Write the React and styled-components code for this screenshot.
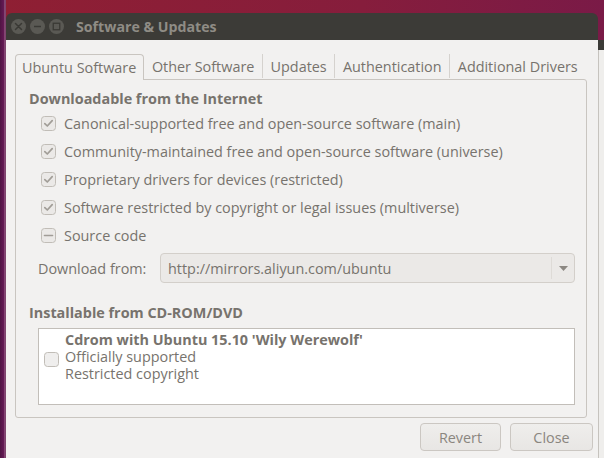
import React from "react";
import styled, { createGlobalStyle } from "styled-components";

const Global = createGlobalStyle`
  html, body { margin: 0; padding: 0; }
  body { font-family: "Open Sans", "DejaVu Sans", sans-serif; }
`;

const FONT = `"Open Sans", "DejaVu Sans", sans-serif`;
const TEXT = "#77736d";
const FS = "14.4px";

const Screen = styled.div`
  width: 604px;
  height: 458px;
  display: flex;
  overflow: hidden;
  background: linear-gradient(90deg, #8f1f33 0%, #861d3c 60%, #7a1a47 100%);
  font-family: ${FONT};
`;

const LeftStrip = styled.div`
  width: 6px;
  flex: none;
  background: linear-gradient(90deg, #4f1443 0, #661a55 4px, #a07090 5px, #5e1a4c 6px);
`;

const RightStrip = styled.div`
  width: 6px;
  flex: none;
  display: flex;
  flex-direction: column;
`;

const RightTop = styled.div`
  height: 40px;
  flex: none;
`;

const RightDark = styled.div`
  height: 10px;
  background: #3c3b37;
  flex: none;
`;

const RightBody = styled.div`
  flex: 1;
  background: #efeeec;
  border-left: 1px solid #c6c3be;
`;

const Window = styled.div`
  flex: 1;
  margin-top: 13px;
  display: flex;
  flex-direction: column;
  min-width: 0;
`;

const TitleBar = styled.div`
  height: 27px;
  flex: none;
  background: #3c3b37;
  border-radius: 6px 6px 0 0;
  display: flex;
  align-items: center;
  padding-left: 5px;
  gap: 4px;
`;

const WinButton = styled.div`
  width: 15px;
  height: 15px;
  border-radius: 50%;
  background: #5a5954;
  display: flex;
  align-items: center;
  justify-content: center;
`;

const Title = styled.div`
  margin-left: 8px;
  font-family: ${FONT};
  font-weight: 700;
  font-size: 14.2px;
  color: #8f8c85;
`;

const Body = styled.div`
  flex: 1;
  background: #f2f1f0;
  padding: 13px 5px 0 9px;
  display: flex;
  flex-direction: column;
  background-image: radial-gradient(ellipse 260px 14px at 260px 106%, rgba(60, 55, 50, 0.35), rgba(0, 0, 0, 0) 100%);
`;

const Notebook = styled.div`
  margin-right: 6px;
  display: flex;
  flex-direction: column;
`;

const TabRow = styled.div`
  display: flex;
  align-items: flex-end;
  height: 26px;
`;

const Tab = styled.div`
  box-sizing: border-box;
  display: flex;
  align-items: center;
  padding: 0 7.6px;
  font-size: ${FS};
  color: ${TEXT};
  white-space: nowrap;
  position: relative;
  ${(p) =>
    p.$active
      ? `
    padding: 0 7px 0 6px;
    border: 1px solid #c9c5c0;
    border-bottom: none;
    border-radius: 4px 4px 0 0;
    height: 26px;
    background: #f2f1f0;
    margin-bottom: -1px;
    z-index: 1;
  `
      : `
    border-right: 1px solid #d5d2ce;
    height: 24px;
    margin-bottom: 1px;
  `}
  ${(p) => (p.$last ? "border-right: none;" : "")}
`;

const Panel = styled.div`
  border: 1px solid #c9c5c0;
  border-radius: 0 3px 3px 3px;
  height: 339px;
  box-sizing: border-box;
  padding: 10px 11px 0 13px;
  display: flex;
  flex-direction: column;
`;

const Heading = styled.div`
  font-weight: 700;
  font-size: ${FS};
  line-height: 18px;
  color: ${TEXT};
  margin-top: ${(p) => p.$mt || 0}px;
`;

const CheckRow = styled.label`
  display: flex;
  align-items: center;
  gap: 8px;
  height: 28px;
  margin-left: 12px;
  font-size: ${FS};
  color: ${TEXT};
  white-space: nowrap;
`;

const CheckList = styled.div`
  margin-top: 1px;
  display: flex;
  flex-direction: column;
`;

const DownloadRow = styled.div`
  display: flex;
  align-items: center;
  margin-top: 4px;
  margin-left: 9px;
  height: 30px;
`;

const DownloadLabel = styled.div`
  font-size: ${FS};
  color: ${TEXT};
  width: 122px;
  flex: none;
  white-space: nowrap;
`;

const Combo = styled.div`
  flex: 1;
  height: 30px;
  box-sizing: border-box;
  border: 1px solid #d3cfca;
  border-radius: 4px;
  background: #ebe9e7;
  display: flex;
  align-items: center;
  padding-left: 7px;
  font-size: ${FS};
  color: ${TEXT};
`;

const ComboText = styled.div`
  flex: 1;
  white-space: nowrap;
`;

const ComboSep = styled.div`
  width: 1px;
  height: 22px;
  background: #dedbd7;
`;

const ComboArrow = styled.div`
  width: 22px;
  display: flex;
  justify-content: center;
  align-items: center;
`;

const ListBox = styled.div`
  margin-top: 6px;
  margin-left: 9px;
  height: 77px;
  box-sizing: border-box;
  background: #ffffff;
  border: 1px solid #c2beb9;
  display: flex;
  align-items: flex-start;
  padding: 2px 0 0 5px;
  gap: 6px;
`;

const ListCheck = styled.div`
  margin-top: 19px;
`;

const ListText = styled.div`
  display: flex;
  flex-direction: column;
  font-size: ${FS};
  color: ${TEXT};
`;

const ListLine = styled.div`
  height: 17px;
  line-height: 17px;
  white-space: nowrap;
  font-weight: ${(p) => (p.$bold ? 700 : 400)};
`;

const ButtonRow = styled.div`
  display: flex;
  justify-content: flex-end;
  gap: 9px;
  margin-top: 5px;
`;

const Button = styled.div`
  width: ${(p) => p.$w}px;
  height: 28px;
  box-sizing: border-box;
  border: 1px solid #cbc7c2;
  border-radius: 4px;
  background: linear-gradient(#efeeec, #e8e6e4);
  display: flex;
  align-items: center;
  justify-content: center;
  font-size: ${FS};
  color: #8a867f;
`;

const CheckBox = ({ state }) => (
  <svg width="15" height="15" viewBox="0 0 15 15">
    <rect x="0.5" y="0.5" width="14" height="14" rx="3" fill={state === "empty" ? "#efeeed" : "#ebe9e7"} stroke="#c1bdb7" />
    {state === "checked" && (
      <path d="M3.8 7.6 L6.3 10 L11.2 4.6" fill="none" stroke="#a19d97" strokeWidth="1.7" strokeLinecap="round" strokeLinejoin="round" />
    )}
    {state === "mixed" && <path d="M3.5 7.5 H11.5" stroke="#a19d97" strokeWidth="1.6" strokeLinecap="round" />}
  </svg>
);

const items = [
  ["Canonical-supported free and open-source software (main)", "checked"],
  ["Community-maintained free and open-source software (universe)", "checked"],
  ["Proprietary drivers for devices (restricted)", "checked"],
  ["Software restricted by copyright or legal issues (multiverse)", "checked"],
  ["Source code", "mixed"],
];

const tabs = ["Other Software", "Updates", "Authentication", "Additional Drivers"];

export default function App() {
  return (
    <>
      <Global />
      <Screen>
        <LeftStrip />
        <Window>
          <TitleBar>
            <WinButton>
              <svg width="9" height="9" viewBox="0 0 9 9">
                <path d="M1.5 1.5 L7.5 7.5 M7.5 1.5 L1.5 7.5" stroke="#3a3935" strokeWidth="1.5" strokeLinecap="round" />
              </svg>
            </WinButton>
            <WinButton>
              <svg width="9" height="9" viewBox="0 0 9 9">
                <path d="M1 4.5 H8" stroke="#3a3935" strokeWidth="1.5" />
              </svg>
            </WinButton>
            <WinButton>
              <svg width="9" height="9" viewBox="0 0 9 9">
                <rect x="1.25" y="1.25" width="6.5" height="6.5" fill="none" stroke="#3a3935" strokeWidth="1.3" />
              </svg>
            </WinButton>
            <Title>Software &amp; Updates</Title>
          </TitleBar>
          <Body>
            <Notebook>
              <TabRow>
                <Tab $active>Ubuntu Software</Tab>
                {tabs.map((t, i) => (
                  <Tab key={t} $last={i === tabs.length - 1}>
                    {t}
                  </Tab>
                ))}
              </TabRow>
              <Panel>
                <Heading>Downloadable from the Internet</Heading>
                <CheckList>
                  {items.map(([t, s]) => (
                    <CheckRow key={t}>
                      <CheckBox state={s} />
                      {t}
                    </CheckRow>
                  ))}
                </CheckList>
                <DownloadRow>
                  <DownloadLabel>Download from:</DownloadLabel>
                  <Combo>
                    <ComboText>http://mirrors.aliyun.com/ubuntu</ComboText>
                    <ComboSep />
                    <ComboArrow>
                      <svg width="9" height="5" viewBox="0 0 9 5">
                        <path d="M0 0 H9 L4.5 5 Z" fill="#8c8882" />
                      </svg>
                    </ComboArrow>
                  </Combo>
                </DownloadRow>
                <Heading $mt={21}>Installable from CD-ROM/DVD</Heading>
                <ListBox>
                  <ListCheck>
                    <CheckBox state="empty" />
                  </ListCheck>
                  <ListText>
                    <ListLine $bold>Cdrom with Ubuntu 15.10 'Wily Werewolf'</ListLine>
                    <ListLine>Officially supported</ListLine>
                    <ListLine>Restricted copyright</ListLine>
                  </ListText>
                </ListBox>
              </Panel>
            </Notebook>
            <ButtonRow>
              <Button $w={81}>Revert</Button>
              <Button $w={83}>Close</Button>
            </ButtonRow>
          </Body>
        </Window>
        <RightStrip>
          <RightTop />
          <RightDark />
          <RightBody />
        </RightStrip>
      </Screen>
    </>
  );
}
